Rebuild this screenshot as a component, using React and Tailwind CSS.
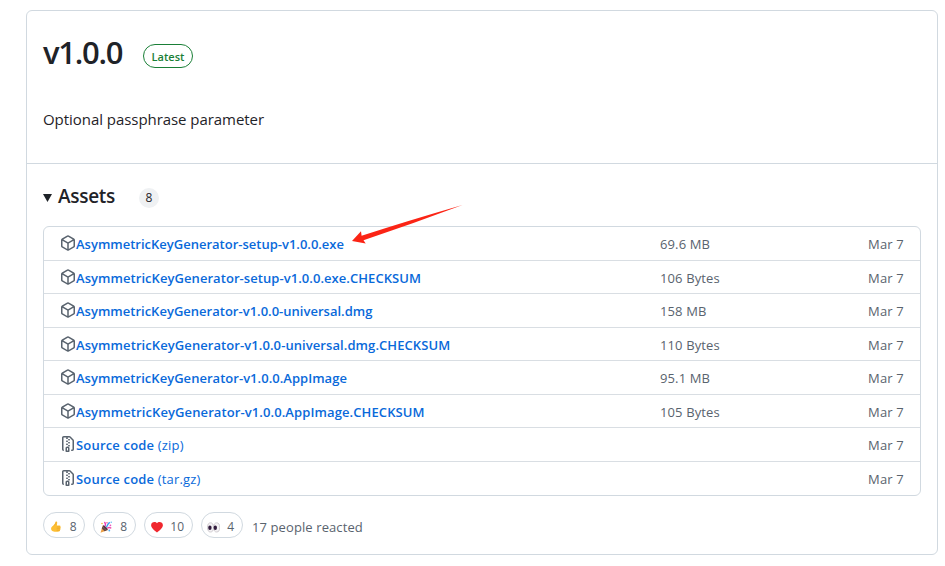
const PACKAGE =
  'm8.878.392 5.25 3.045c.54.314.872.89.872 1.514v6.098a1.75 1.75 0 0 1-.872 1.514l-5.25 3.045a1.75 1.75 0 0 1-1.756 0l-5.25-3.045A1.75 1.75 0 0 1 1 11.049V4.951c0-.624.332-1.201.872-1.514L7.122.392a1.75 1.75 0 0 1 1.756 0ZM7.875 1.69l-4.63 2.685L8 7.133l4.755-2.758-4.63-2.685a.248.248 0 0 0-.25 0ZM2.5 5.677v5.372c0 .09.047.171.125.216l4.625 2.683V8.432Zm6.25 8.271 4.625-2.683a.25.25 0 0 0 .125-.216V5.677L8.75 8.432Z';
const ZIP =
  'M3.5 1.75v11.5c0 .09.048.173.126.217a.75.75 0 0 1-.752 1.298A1.748 1.748 0 0 1 2 13.25V1.75C2 .784 2.784 0 3.75 0h5.586c.464 0 .909.185 1.237.513l2.914 2.914c.329.328.513.773.513 1.237v8.586A1.75 1.75 0 0 1 12.25 15h-.5a.75.75 0 0 1 0-1.5h.5a.25.25 0 0 0 .25-.25V4.664a.25.25 0 0 0-.073-.177L9.513 1.573a.25.25 0 0 0-.177-.073H7.25a.75.75 0 0 1 0 1.5h-.5a.75.75 0 0 1 0-1.5h-3a.25.25 0 0 0-.25.25Zm3.75 8.75h.5c.966 0 1.75.784 1.75 1.75v3a.75.75 0 0 1-.75.75h-2.5a.75.75 0 0 1-.75-.75v-3c0-.966.784-1.75 1.75-1.75ZM6 5.25a.75.75 0 0 1 .75-.75h.5a.75.75 0 0 1 0 1.5h-.5A.75.75 0 0 1 6 5.25Zm.75 2.25h.5a.75.75 0 0 1 0 1.5h-.5a.75.75 0 0 1 0-1.5ZM8 3.75A.75.75 0 0 1 8.75 3h.5a.75.75 0 0 1 0 1.5h-.5A.75.75 0 0 1 8 3.75ZM8.75 6h.5a.75.75 0 0 1 0 1.5h-.5a.75.75 0 0 1 0-1.5ZM8 9.75A.75.75 0 0 1 8.75 9h.5a.75.75 0 0 1 0 1.5h-.5A.75.75 0 0 1 8 9.75Zm-1 2.5v2.25h1v-2.25a.25.25 0 0 0-.25-.25h-.5a.25.25 0 0 0-.25.25Z';

const assets = [
  { name: 'AsymmetricKeyGenerator-setup-v1.0.0.exe', size: '69.6 MB', tracking: '' },
  { name: 'AsymmetricKeyGenerator-setup-v1.0.0.exe.CHECKSUM', size: '106 Bytes', tracking: 'tracking-[0.06px]' },
  { name: 'AsymmetricKeyGenerator-v1.0.0-universal.dmg', size: '158 MB', tracking: 'tracking-[0.01px]' },
  { name: 'AsymmetricKeyGenerator-v1.0.0-universal.dmg.CHECKSUM', size: '110 Bytes', tracking: 'tracking-[0.08px]' },
  { name: 'AsymmetricKeyGenerator-v1.0.0.AppImage', size: '95.1 MB', tracking: 'tracking-[0.03px]' },
  { name: 'AsymmetricKeyGenerator-v1.0.0.AppImage.CHECKSUM', size: '105 Bytes', tracking: 'tracking-[0.1px]' },
  { name: 'Source code', kind: '(zip)', tracking: 'tracking-[0.18px]' },
  { name: 'Source code', kind: '(tar.gz)', tracking: 'tracking-[0.18px]' },
];

function Octicon({ d }) {
  return (
    <svg viewBox="0 0 16 16" className="mb-px size-4 shrink-0 fill-[#59636e]">
      <path d={d} />
    </svg>
  );
}

function AssetRow({ name, kind, size, tracking }) {
  return (
    <li className="group flex h-[33.5px] items-center border-t border-[#d9dee3] px-4 first:h-[32.9px] first:border-t-0">
      <div className="flex w-[600px] items-center">
        <Octicon d={kind ? ZIP : PACKAGE} />
        <a className={'pt-0.5 whitespace-pre text-[#0969da] group-even:pt-[3px] ' + tracking}>
          <span className="font-semibold">{name}</span>
          {kind ? ' ' + kind : ''}
        </a>
      </div>
      <span className="flex-1 pt-0.5 tracking-[0.12px] text-[#59636e] group-even:pt-[3px]">{size}</span>
      <span className="pt-0.5 tracking-[0.18px] text-[#59636e] group-even:pt-[3px]">Mar 7</span>
    </li>
  );
}

function Thumb() {
  return (
    <svg viewBox="0 0 12 12" className="size-3">
      <path d="M5.7.6c.9-.4 1.6.2 1.5 1.2L6.9 4.400l2.700.1c1 .1 1.200 1 .7 1.500.6.4.6 1.200 0 1.600.4.5.2 1.200-.3 1.500.2.8-.2 1.400-1.100 1.500-2 .3-4.400.3-6.100-.4C1.500 9.600 1 8.500 1.100 7.400c.1-1.200.9-2 2-2.700C4.500 3.700 5.200 2.200 5.700.6Z" fill="#fdbf35" />
      <path d="M6.800 6h3.300M6.700 7.700h3.200M6.600 9.300h2.900" stroke="#e09a20" strokeWidth=".5" />
      <path d="M3.600 5C5 4 5.900 2.800 6.100 1" stroke="#e79c1e" strokeWidth=".5" fill="none" />
    </svg>
  );
}

function Party() {
  return (
    <svg viewBox="0 0 12 12" className="size-3">
      <path d="M2.800 4.200 7.800 9 .5 11.700Z" fill="#eda044" />
      <path d="M2.400 5.400 6.800 9.400 4.600 10.200 1.800 7.400Z" fill="#654748" />
      <ellipse cx="5.300" cy="6.700" rx="1.100" ry="3.200" transform="rotate(-45 5.300 6.700)" fill="#543548" />
      <path d="M5 5.200C6 3.700 5.300 2.100 4.400 1" stroke="#ee3fb9" strokeWidth="1.300" fill="none" />
      <path d="M6.300 5.900C7.700 4.800 7.300 2.800 9.800 1.300" stroke="#369ff2" strokeWidth="1.400" fill="none" />
      <path d="M7.300 7.200c1.300-1 2.700-.8 4 .1" stroke="#f048ab" strokeWidth="1.300" fill="none" />
      <circle cx="2" cy="2.500" r=".8" fill="#f9bd35" />
      <circle cx="7" cy="1.700" r=".8" fill="#f06595" />
      <circle cx="10.400" cy="4.300" r=".9" fill="#eb57bd" />
      <circle cx="9.300" cy="9.500" r=".9" fill="#56b1f3" />
      <circle cx="11.200" cy="1.300" r=".7" fill="#55b9f3" />
    </svg>
  );
}

function Heart() {
  return (
    <svg viewBox="0 0 12 12" className="size-3">
      <path d="M6 2.200C7.200.2 11.900.5 11.900 4.200 11.900 7 8.200 9.800 6 11.500 3.800 9.800.1 7 .1 4.200.1.5 4.800.2 6 2.200Z" fill="#f0272e" />
    </svg>
  );
}

function Eyes() {
  return (
    <svg viewBox="0 0 13 12" className="h-3 w-[13px]">
      <ellipse cx="3.500" cy="6.400" rx="3" ry="4.600" fill="#f4f2f4" stroke="#c6c2c6" strokeWidth=".8" />
      <ellipse cx="9.700" cy="6.400" rx="3" ry="4.600" fill="#f4f2f4" stroke="#c6c2c6" strokeWidth=".8" />
      <ellipse cx="2.900" cy="6.700" rx="1.700" ry="2.300" fill="#321c3e" />
      <ellipse cx="8.300" cy="6.700" rx="1.700" ry="2.300" fill="#321c3e" />
    </svg>
  );
}

function Reaction({ children, count, className }) {
  return (
    <button className={'flex h-[26px] items-center rounded-full border border-[#d1d9e0] text-xs text-[#59636e] ' + className}>
      <span className="pt-1">{children}</span>
      <span className="ml-auto pt-[3px]">{count}</span>
    </button>
  );
}

export default function App() {
  return (
    <main className="h-[566px] w-[945px] bg-white pt-2.5 pl-[26px] font-['Open_Sans','Noto_Sans',sans-serif] text-[13px] text-[#1f2328]">
      <section className="h-[545px] w-[912px] rounded-md border border-[#d1d9e0]">
        <div className="h-[153px] border-b border-[#d1d9e0] px-4 pt-[17px]">
          <div className="flex h-12 items-center">
            <h1 className="w-[100px] text-[31px] font-semibold tracking-[-1.25px]">v1.0.0</h1>
            <span className="mt-2 flex h-6 w-[50px] items-center justify-center rounded-full border border-[#1a7f37] pt-0.5 text-[11px] font-semibold text-[#1a7f37]">
              Latest
            </span>
          </div>
          <p className="mt-[31px] text-[15px] leading-6 tracking-[-0.05px]">Optional passphrase parameter</p>
        </div>
        <div className="px-4">
          <div className="flex h-[62px] items-center pt-1">
            <svg viewBox="0 0 9 8" className="mt-0.5 h-2 w-[9px] fill-[#1f2328]">
              <path d="M0 0h9L4.500 8Z" />
            </svg>
            <h2 className="mb-0.5 ml-1.5 w-[81px] text-[19px] font-semibold tracking-[-0.3px]">Assets</h2>
            <span className="mt-0.5 flex size-5 items-center justify-center rounded-full bg-[#eff1f3] text-xs font-medium">8</span>
          </div>
          <div className="relative">
            <ul className="h-[270px] w-[878px] rounded-md border border-[#d1d9e0]">
              {assets.map((asset, i) => (
                <AssetRow key={i} {...asset} />
              ))}
            </ul>
            <svg viewBox="0 0 112 40" className="absolute -top-[21px] left-[309px] h-10 w-28 fill-[#fb2415]">
              <path d="M110.500 0Q60 19 11.500 35.300L13.700 38.600 0 36 9 26.300 9.600 30.800Q55 16 110.500 0Z" />
            </svg>
          </div>
          <div className="flex items-center pt-4 text-[#59636e]">
            <Reaction count="8" className="w-[42px] pr-[7.500px] pl-1.5"><Thumb /></Reaction>
            <Reaction count="8" className="ml-2 w-[43px] pr-2 pl-1.5"><Party /></Reaction>
            <Reaction count="10" className="ml-2 w-[49px] pr-2 pl-1.5"><Heart /></Reaction>
            <Reaction count="4" className="ml-2 w-[42px] pr-2 pl-[5px]"><Eyes /></Reaction>
            <span className="ml-[9px] pt-1.5 tracking-[0.1px]">17 people reacted</span>
          </div>
        </div>
      </section>
    </main>
  );
}
